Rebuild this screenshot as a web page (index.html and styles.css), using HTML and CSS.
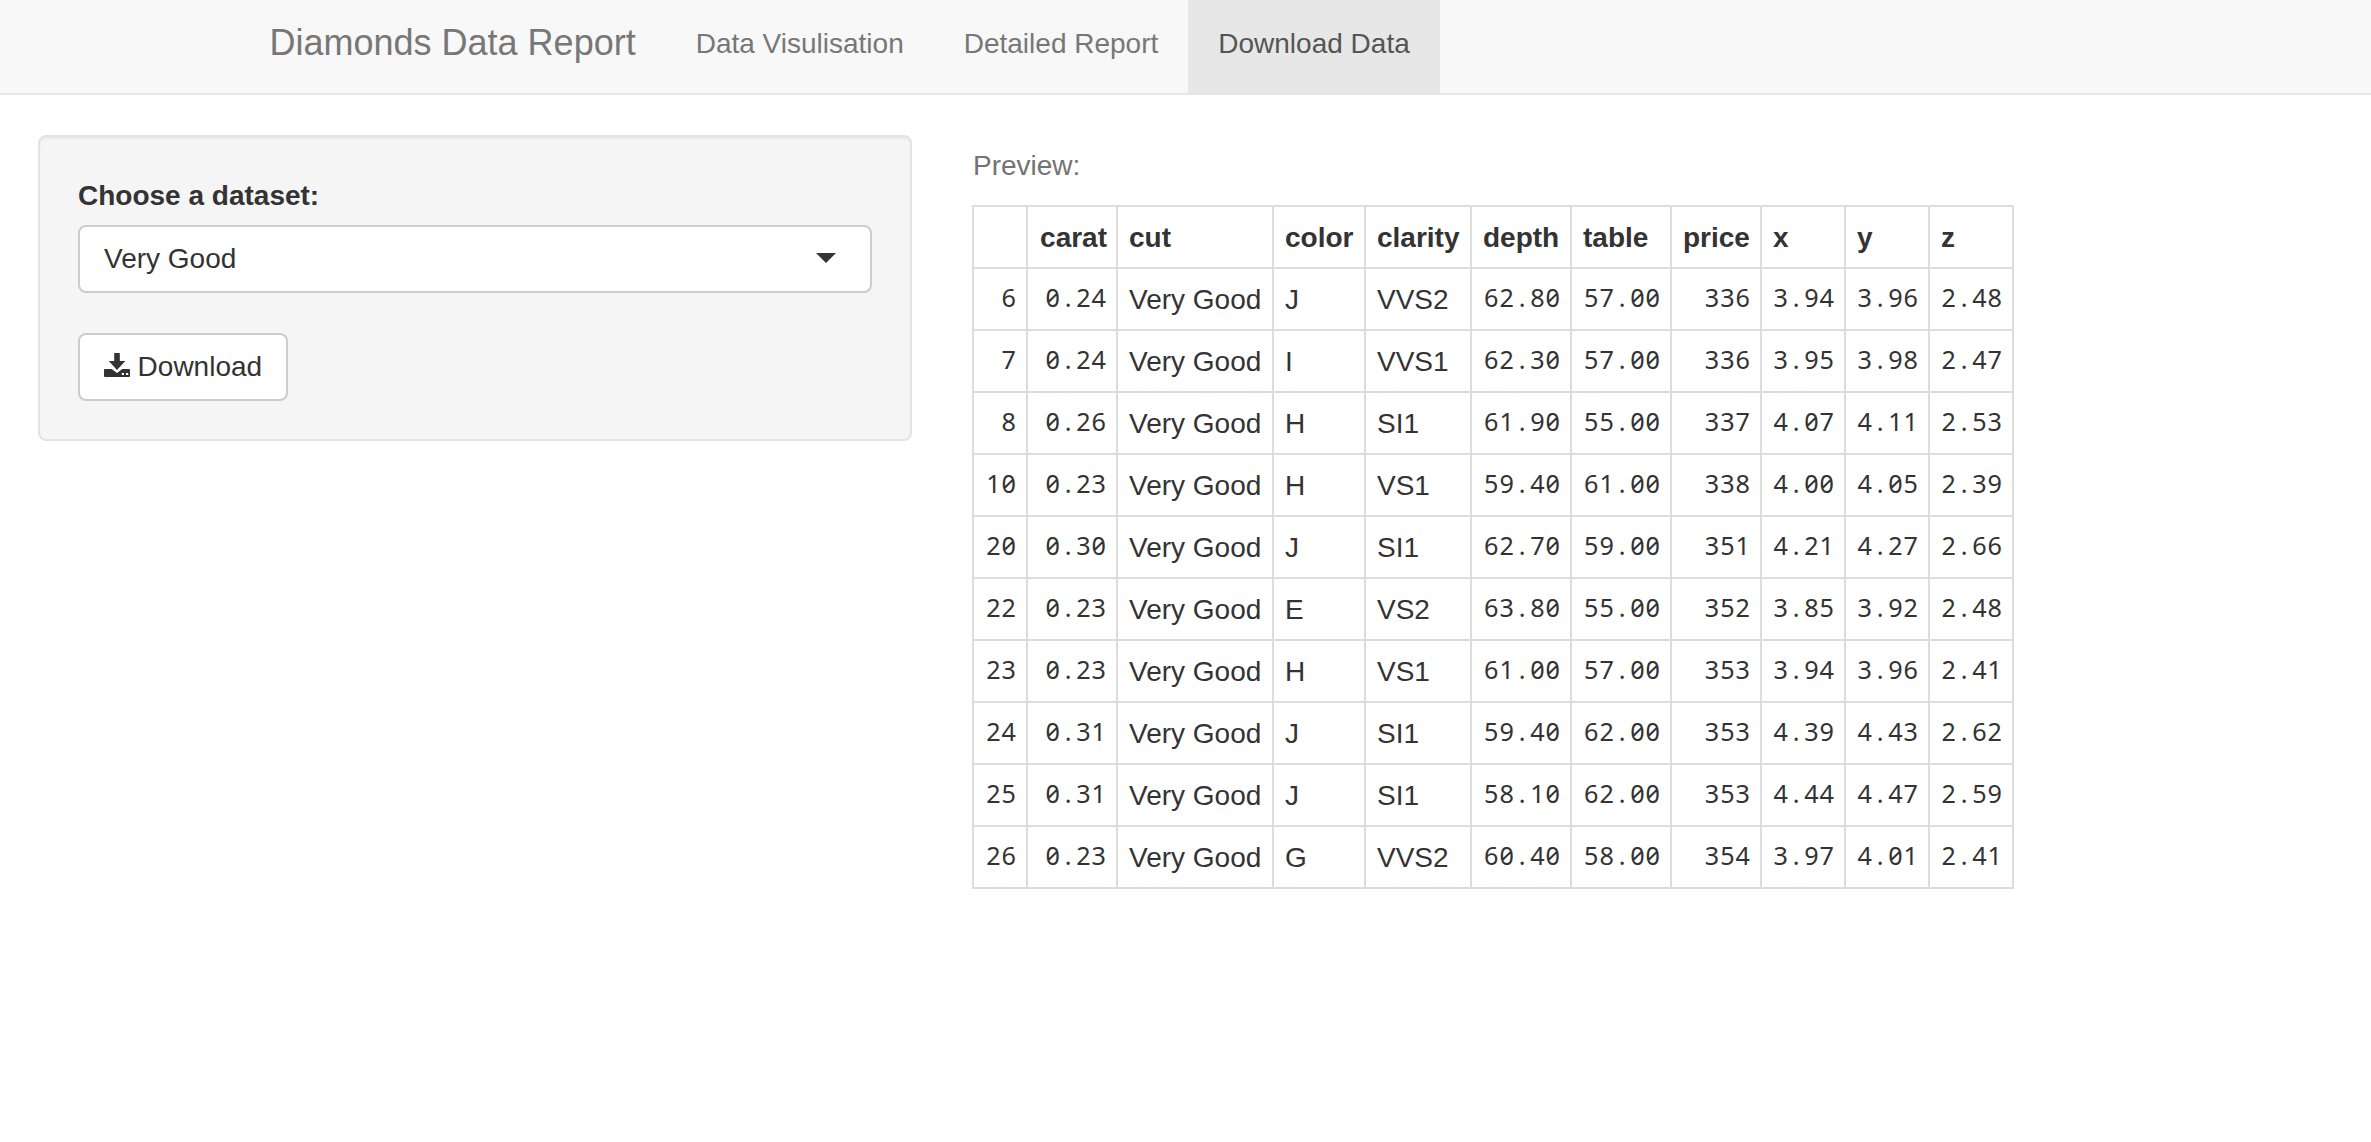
FILE: index.html
```html
<!DOCTYPE html>
<html lang="en">
<head>
<meta charset="utf-8">
<title>Diamonds Data Report</title>
<link rel="stylesheet" href="styles.css">
</head>
<body>
<nav class="navbar">
  <a class="brand">Diamonds Data Report</a>
  <ul class="nav">
    <li class="nav-item">Data Visulisation</li>
    <li class="nav-item">Detailed Report</li>
    <li class="nav-item active">Download Data</li>
  </ul>
</nav>
<main class="content">
  <form class="well">
    <label class="label">Choose a dataset:</label>
    <div class="select"><span>Very Good</span><svg class="caret" viewBox="0 0 20 10"><path d="M0 0H20L10 10Z"/></svg></div>
    <button type="button" class="btn"><svg class="icon" viewBox="0 0 26 24"><path d="M10.200 0h5.600v8H21.300L13 17 4.800 8h5.400z"/><path fill-rule="evenodd" d="M1 16H7.700L13 20 18.300 16H25a1 1 0 0 1 1 1V23a1 1 0 0 1-1 1H1a1 1 0 0 1-1-1V17a1 1 0 0 1 1-1zM17.800 20v2h2.200v-2zM22 20v2h2.200v-2z"/></svg><span>Download</span></button>
  </form>
  <section class="preview">
    <p class="help">Preview:</p>
    <table class="table">
      <colgroup><col class="c-id"><col class="c-carat"><col class="c-cut"><col class="c-color"><col class="c-clarity"><col class="c-depth"><col class="c-table"><col class="c-price"><col class="c-dim"><col class="c-dim"><col class="c-dim"></colgroup>
      <thead><tr><th></th><th class="right">carat</th><th>cut</th><th>color</th><th>clarity</th><th>depth</th><th>table</th><th>price</th><th>x</th><th>y</th><th>z</th></tr></thead>
      <tbody id="rows"></tbody>
    </table>
  </section>
</main>
<script src="table.js"></script>
</body>
</html>
```
FILE: styles.css
```css
* { box-sizing: border-box; }
body { margin: 0; background: #fff; color: #333; font: 28px/40px "Liberation Sans", Arial, sans-serif; }
.navbar { display: flex; height: 95px; padding-left: 239.5px; background: #f8f8f8; border-bottom: 2px solid #e7e7e7; color: #777; }
.brand { padding: 23px 30px 0; font-size: 36px; line-height: 40px; }
.nav { display: flex; margin: 0; padding: 0; list-style: none; }
.nav-item { padding: 24px 30px 0; line-height: 40px; }
.nav-item.active { background: #e7e7e7; color: #555; }
.content { display: flex; gap: 60px; align-items: flex-start; padding: 40px 0 0 38px; }
.well { width: 874px; height: 306px; padding: 38px; background: #f5f5f5; border: 2px solid #e3e3e3; border-radius: 8px; box-shadow: inset 0 2px 2px rgba(0,0,0,.05); }
.label { display: block; margin-bottom: 9px; padding-top: 1px; font-weight: 700; }
.select { display: flex; align-items: center; justify-content: space-between; height: 68px; margin-bottom: 40px; padding: 0 34px 0 24px; background: #fff; border: 2px solid #ccc; border-radius: 8px; }
.caret { width: 20px; height: 10px; margin-top: -2px; fill: #333; }
.btn { display: flex; align-items: center; gap: 7.6px; height: 68px; padding: 0 23.5px 0 24px; background: #fff; border: 2px solid #ccc; border-radius: 8px; color: #333; font: inherit; }
.icon { width: 26px; height: 24px; margin-top: -4px; fill: #333; }
.preview { padding-top: 10px; }
.help { margin: 0 0 19px; padding: 1px 0 0 1px; color: #737373; }
.table { width: 1042px; table-layout: fixed; border-collapse: collapse; }
.table th, .table td { height: 62px; padding: 2px 9px 0 11px; border: 2px solid #ddd; text-align: left; vertical-align: top; line-height: 58px; white-space: nowrap; }
.table .right, .table .num { text-align: right; }
.table .num { padding: 0 9px 0 10px; font-family: "Noto Sans", sans-serif; font-size: 25.2px; font-feature-settings: "zero"; letter-spacing: .98px; line-height: 56px; }
.point { padding: 0 3.83px; }
.c-id { width: 54px; }
.c-carat { width: 90px; }
.c-cut { width: 156px; }
.c-color { width: 92px; }
.c-clarity { width: 106px; }
.c-depth, .c-table { width: 100px; }
.c-price { width: 90px; }
.c-dim { width: 84px; }
```
FILE: table.js
```js
const diamonds = [
  ["6", "0.24", "Very Good", "J", "VVS2", "62.80", "57.00", "336", "3.94", "3.96", "2.48"],
  ["7", "0.24", "Very Good", "I", "VVS1", "62.30", "57.00", "336", "3.95", "3.98", "2.47"],
  ["8", "0.26", "Very Good", "H", "SI1", "61.90", "55.00", "337", "4.07", "4.11", "2.53"],
  ["10", "0.23", "Very Good", "H", "VS1", "59.40", "61.00", "338", "4.00", "4.05", "2.39"],
  ["20", "0.30", "Very Good", "J", "SI1", "62.70", "59.00", "351", "4.21", "4.27", "2.66"],
  ["22", "0.23", "Very Good", "E", "VS2", "63.80", "55.00", "352", "3.85", "3.92", "2.48"],
  ["23", "0.23", "Very Good", "H", "VS1", "61.00", "57.00", "353", "3.94", "3.96", "2.41"],
  ["24", "0.31", "Very Good", "J", "SI1", "59.40", "62.00", "353", "4.39", "4.43", "2.62"],
  ["25", "0.31", "Very Good", "J", "SI1", "58.10", "62.00", "353", "4.44", "4.47", "2.59"],
  ["26", "0.23", "Very Good", "G", "VVS2", "60.40", "58.00", "354", "3.97", "4.01", "2.41"]
];
const textColumns = [2, 3, 4];
document.getElementById("rows").innerHTML = diamonds.map(row =>
  "<tr>" + row.map((value, i) => textColumns.includes(i)
    ? `<td>${value}</td>`
    : `<td class="num">${value.replace(".", '<span class="point">.</span>')}</td>`
  ).join("") + "</tr>").join("");
```
